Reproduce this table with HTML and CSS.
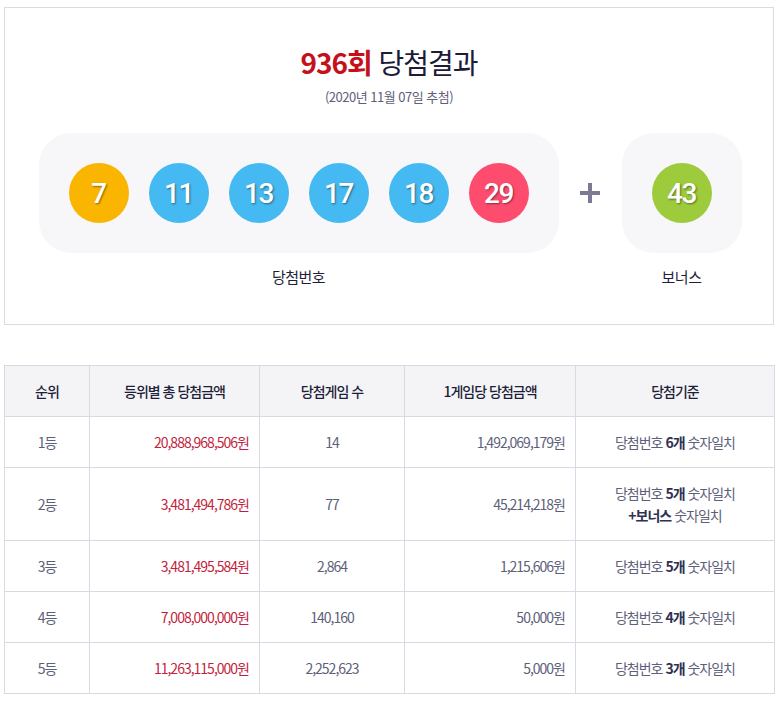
FILE: index.html
```html
<!DOCTYPE html>
<html lang="ko">
<head>
<meta charset="utf-8">
<title>936회 당첨결과</title>
<link rel="stylesheet" href="styles.css">
</head>
<body>
<div class="page">
  <section class="card">
    <h2 class="title"><strong>936회</strong> 당첨결과</h2>
    <p class="date">(2020년 11월 07일 추첨)</p>
    <div class="draw">
      <div class="group">
        <div class="box main">
          <span class="ball yellow">7</span>
          <span class="ball blue">11</span>
          <span class="ball blue">13</span>
          <span class="ball blue">17</span>
          <span class="ball blue">18</span>
          <span class="ball red">29</span>
        </div>
        <p class="label">당첨번호</p>
      </div>
      <div class="plus">
        <svg width="20" height="20" viewBox="0 0 20 20"><rect x="8" y="0" width="4" height="20" fill="#7b7b95"/><rect x="0" y="8" width="20" height="4" fill="#7b7b95"/></svg>
      </div>
      <div class="group">
        <div class="box bonus">
          <span class="ball green">43</span>
        </div>
        <p class="label">보너스</p>
      </div>
    </div>
  </section>

  <table class="result">
    <colgroup>
      <col class="c1"><col class="c2"><col class="c3"><col class="c4"><col class="c5">
    </colgroup>
    <thead>
      <tr>
        <th>순위</th>
        <th>등위별 총 당첨금액</th>
        <th>당첨게임 수</th>
        <th>1게임당 당첨금액</th>
        <th>당첨기준</th>
      </tr>
    </thead>
    <tbody>
      <tr>
        <td>1등</td>
        <td class="amt total">20,888,968,506원</td>
        <td class="num">14</td>
        <td class="amt">1,492,069,179원</td>
        <td>당첨번호 <b>6개</b> 숫자일치</td>
      </tr>
      <tr class="tall">
        <td>2등</td>
        <td class="amt total">3,481,494,786원</td>
        <td class="num">77</td>
        <td class="amt">45,214,218원</td>
        <td>당첨번호 <b>5개</b> 숫자일치<br><b>+보너스</b> 숫자일치</td>
      </tr>
      <tr>
        <td>3등</td>
        <td class="amt total">3,481,495,584원</td>
        <td class="num">2,864</td>
        <td class="amt">1,215,606원</td>
        <td>당첨번호 <b>5개</b> 숫자일치</td>
      </tr>
      <tr>
        <td>4등</td>
        <td class="amt total">7,008,000,000원</td>
        <td class="num">140,160</td>
        <td class="amt">50,000원</td>
        <td>당첨번호 <b>4개</b> 숫자일치</td>
      </tr>
      <tr>
        <td>5등</td>
        <td class="amt total">11,263,115,000원</td>
        <td class="num">2,252,623</td>
        <td class="amt">5,000원</td>
        <td>당첨번호 <b>3개</b> 숫자일치</td>
      </tr>
    </tbody>
  </table>
</div>
</body>
</html>
```

FILE: styles.css
```css
* { box-sizing: border-box; }

body {
  margin: 0;
  background: #fff;
  font-family: "Noto Sans CJK KR", "Noto Sans", sans-serif;
  color: #1f1f3a;
}

.page {
  width: 770px;
  margin: 7px 0 0 4px;
}

.card {
  height: 318px;
  border: 1px solid #dcdcdc;
  padding-top: 36px;
  text-align: center;
}

.title {
  margin: 0;
  font-size: 28px;
  line-height: 36px;
  font-weight: 400;
  letter-spacing: -1px;
  color: #1c1c38;
}

.title strong {
  color: #c4121d;
  font-weight: 700;
}

.date {
  margin: 8px 0 0;
  font-size: 13px;
  line-height: 18px;
  letter-spacing: -0.5px;
  color: #5f6078;
}

.draw {
  display: flex;
  justify-content: center;
  align-items: flex-start;
  margin-top: 27px;
  padding-left: 2px;
}

.group {
  display: flex;
  flex-direction: column;
  align-items: center;
}

.box {
  display: flex;
  align-items: center;
  gap: 20px;
  height: 120px;
  padding: 0 30px;
  background: #f7f7f9;
  border-radius: 32px;
}

.plus {
  width: 63px;
  height: 120px;
  display: flex;
  align-items: center;
  justify-content: center;
}

.ball {
  width: 60px;
  height: 60px;
  border-radius: 50%;
  display: flex;
  align-items: center;
  justify-content: center;
  color: #fff;
  font-family: Roboto, "Noto Sans", sans-serif;
  font-weight: 500;
  font-size: 28px;
  letter-spacing: -1.5px;
  text-shadow: 1px 1px 2px rgba(0, 0, 0, 0.45);
}

.yellow { background: #f9b500; }
.blue { background: #45b9f1; }
.red { background: #fe4c6f; }
.green { background: #9dcb3c; }

.label {
  margin: 14px 0 0;
  font-size: 15px;
  line-height: 20px;
  letter-spacing: -0.5px;
  color: #1f1f3a;
}

.result {
  width: 770px;
  margin-top: 40px;
  border-collapse: collapse;
  table-layout: fixed;
  border-top: 1px solid #1b1b42;
  font-size: 14px;
  letter-spacing: -1px;
}

.c1 { width: 85px; }
.c2 { width: 170px; }
.c3 { width: 145px; }
.c4 { width: 171px; }
.c5 { width: 199px; }

.result th,
.result td {
  border: 1px solid #d9d9e3;
  padding: 0 10px;
  text-align: center;
  height: 51px;
}

.result th {
  background: #f4f4f7;
  font-weight: 500;
  color: #1f1f3a;
}

.result td {
  color: #5e5f7a;
  line-height: 22px;
}

.result tr.tall td { height: 73px; }

.result td.amt { text-align: right; }
.result td.total { color: #c31f3d; }

.result td b {
  color: #2f3052;
  font-weight: 700;
}
```
